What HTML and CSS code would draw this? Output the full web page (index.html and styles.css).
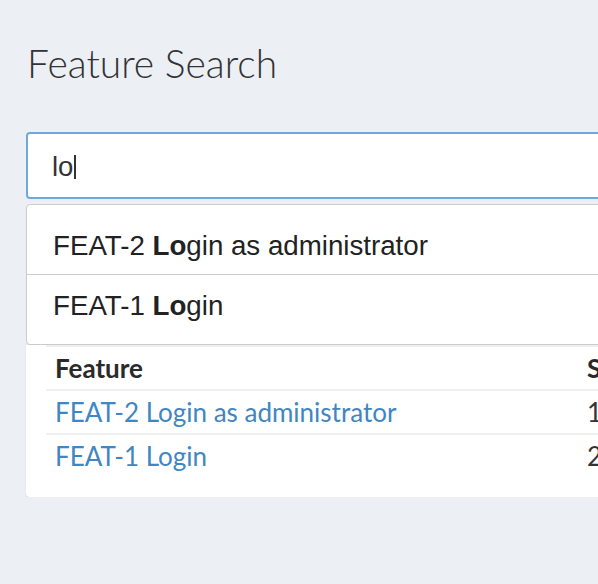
FILE: index.html
```html
<!DOCTYPE html>
<html lang="en">
<head>
<meta charset="utf-8">
<title>Feature Search</title>
<link rel="stylesheet" href="styles.css">
</head>
<body>
<div class="page">
  <h1 class="title">Feature Search</h1>
  <div class="search">
    <div class="search-input"><span class="typed">lo</span><span class="caret"></span></div>
    <ul class="suggestions">
      <li class="suggestion">FEAT-2 <b>Lo</b>gin as administrator</li>
      <li class="suggestion">FEAT-1 <b>Lo</b>gin</li>
    </ul>
  </div>
  <div class="card">
    <table class="results">
      <thead>
        <tr><th class="col-feature">Feature</th><th>Scenarios</th></tr>
      </thead>
      <tbody>
        <tr><td><a href="#">FEAT-2 Login as administrator</a></td><td>1</td></tr>
        <tr><td><a href="#">FEAT-1 Login</a></td><td>2</td></tr>
      </tbody>
    </table>
  </div>
</div>
</body>
</html>
```
FILE: styles.css
```css
html, body {
  margin: 0;
  padding: 0;
  overflow: hidden;
}
body {
  background: #ecf0f5;
  color: #333;
  font-family: "Lato", "Liberation Sans", sans-serif;
}
.page {
  width: 900px;
  padding-left: 26px;
}
.title {
  margin: 40px 0 0 1px;
  font-family: "Lato", sans-serif;
  font-weight: 300;
  font-size: 39px;
  line-height: 47px;
  color: #333;
}
.search {
  margin-top: 45px;
}
.search-input {
  box-sizing: border-box;
  height: 67px;
  background: #fff;
  border: 2px solid #6ea8e2;
  border-radius: 4px;
  padding: 3px 24px 0;
  display: flex;
  align-items: center;
  font-family: "Liberation Sans", Arial, sans-serif;
  font-size: 27.5px;
  color: #333;
}
.caret {
  display: inline-block;
  width: 2px;
  height: 24px;
  background: #333;
  margin-left: 1px;
}
.suggestions {
  list-style: none;
  margin: 5px 0 0;
  padding: 10px 0 10px;
  background: #fff;
  border: 1px solid #cccccc;
  border-radius: 4px;
  box-shadow: 0 2px 2px rgba(0, 0, 0, 0.04);
  font-family: "Liberation Sans", Arial, sans-serif;
  font-size: 27.7px;
  color: #222;
}
.suggestion {
  padding: 3px 26px 0;
  line-height: 56px;
}
.suggestion + .suggestion {
  border-top: 1px solid #cccccc;
}
.suggestion b {
  font-weight: 700;
}
.card {
  background: #fff;
  border-radius: 0 0 4px 4px;
  box-shadow: 0 1px 2px rgba(0, 0, 0, 0.1);
  padding: 0 20px 20px;
}
.results {
  width: 100%;
  border-collapse: collapse;
  border-top: 2px solid #efefef;
  font-size: 26px;
  color: #333;
}
.results th,
.results td {
  text-align: left;
  padding: 0 9px;
  line-height: 42px;
}
.results th {
  font-weight: 700;
  color: #2a2a2a;
  border-bottom: 2px solid #efefef;
}
.results tbody tr + tr td {
  border-top: 2px solid #efefef;
}
.col-feature {
  width: 514px;
}
.results a {
  color: #3f86c2;
  text-decoration: none;
}
```
